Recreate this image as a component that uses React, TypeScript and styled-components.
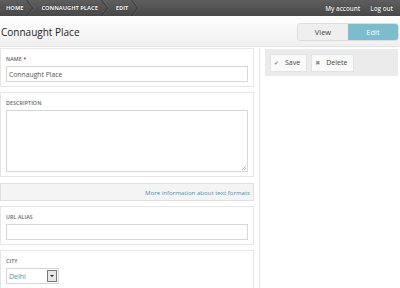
import React from "react";
import styled, { createGlobalStyle } from "styled-components";

const Global = createGlobalStyle`
  html, body { margin: 0; padding: 0; background: #fff; }
  body { font-family: "Open Sans", "DejaVu Sans", sans-serif; color: #333; }
  * { box-sizing: border-box; }
`;

const Page = styled.div`
  width: 400px;
  height: 288px;
  overflow: hidden;
  display: flex;
  flex-direction: column;
`;

const TopBar = styled.div`
  flex-shrink: 0;
  height: 16px;
  background: linear-gradient(#5e5e5e, #484848);
  display: flex;
  align-items: stretch;
  justify-content: space-between;
  font-size: 5.7px;
  font-weight: 700;
  color: #fff;
  text-shadow: 0 0 1px #000;
`;

const Crumbs = styled.div`
  display: flex;
  align-items: stretch;
  overflow: hidden;
`;

const Crumb = styled.div<{ $first?: boolean }>`
  position: relative;
  display: flex;
  align-items: center;
  padding: 0 13px 0 ${(p) => (p.$first ? 6 : 5)}px;
  &::after {
    content: "";
    position: absolute;
    right: 4px;
    top: 2px;
    width: 11px;
    height: 11px;
    transform: rotate(45deg) skew(8deg, 8deg);
    border-top: 1px solid #3c3c3c;
    border-right: 1px solid #3c3c3c;
    box-shadow: 1px -1px 0 rgba(255, 255, 255, 0.08);
  }
`;

const UserLinks = styled.div`
  display: flex;
  align-items: center;
  gap: 10px;
  padding-right: 7px;
  font-weight: 600;
  font-size: 6.3px;
`;

const Header = styled.div`
  flex-shrink: 0;
  height: 31px;
  background: linear-gradient(#fff, #f0f0f0);
  border-bottom: 1px solid #e4e4e4;
  display: flex;
  align-items: center;
  justify-content: space-between;
  padding: 0 2px 0 1px;
`;

const Title = styled.h1`
  margin: 0;
  font-size: 10px;
  font-weight: 400;
  color: #222;
  padding-top: 2px;
`;

const Tabs = styled.div`
  display: flex;
  margin-top: 1px;
  border-radius: 3px;
  overflow: hidden;
  box-shadow: 0 0 0 1px #ddd;
`;

const Tab = styled.div<{ $active?: boolean }>`
  width: 50px;
  height: 16px;
  display: flex;
  align-items: center;
  justify-content: center;
  font-size: 7.5px;
  background: ${(p) => (p.$active ? "#7bbccd" : "#efefef")};
  color: ${(p) => (p.$active ? "#fff" : "#444")};
`;

const Body = styled.div`
  flex: 1;
  min-height: 0;
  display: flex;
  padding-top: 1px;
`;

const Main = styled.div`
  flex-shrink: 0;
  width: 254px;
  display: flex;
  flex-direction: column;
  gap: 5px;
`;

const Side = styled.div`
  flex: 1;
  border-left: 1px solid #e4e4e4;
  margin-left: 5px;
  padding: 1px 2px 0 5px;
`;

const Section = styled.div`
  flex-shrink: 0;
  border: 1px solid #e6e6e6;
  padding: 7px 5px 4px 5px;
  display: flex;
  flex-direction: column;
  gap: 3px;
`;

const Label = styled.div`
  font-size: 5.3px;
  font-weight: 600;
  color: #666;
  text-transform: uppercase;
  letter-spacing: 0.1px;
  line-height: 7px;
  height: 7px;
`;

const Req = styled.span`
  color: #d00;
`;

const Input = styled.div`
  height: 16px;
  border: 1px solid #d6d6d6;
  font-size: 6.8px;
  color: #555;
  display: flex;
  align-items: center;
  padding-left: 2px;
`;

const TextArea = styled.div`
  position: relative;
  height: 62px;
  border: 1px solid #d6d6d6;
`;

const Grip = styled.svg`
  position: absolute;
  right: 1px;
  bottom: 1px;
`;

const Formats = styled.div`
  flex-shrink: 0;
  height: 18px;
  margin-top: 1px;
  background: #f4f4f4;
  border: 1px solid #e0e0e0;
  display: flex;
  align-items: center;
  justify-content: flex-end;
  padding-right: 3px;
  font-size: 6.1px;
  color: #4b8fb0;
`;

const Select = styled.div`
  width: 53px;
  height: 16px;
  border: 1px solid #d6d6d6;
  display: flex;
  align-items: center;
  justify-content: space-between;
  padding: 0 1px 0 2px;
  font-size: 7px;
  color: #4b8fb0;
`;

const SelectBtn = styled.div`
  width: 10px;
  height: 12px;
  border: 1px solid #777;
  background: #e6e6e6;
  display: flex;
  align-items: center;
  justify-content: center;
  &::after {
    content: "";
    border-left: 2px solid transparent;
    border-right: 2px solid transparent;
    border-top: 2px solid #222;
  }
`;

const Actions = styled.div`
  height: 27px;
  background: #ebebeb;
  display: flex;
  align-items: center;
  gap: 4px;
  padding-left: 5px;
`;

const Button = styled.div`
  height: 18px;
  background: #fafafa;
  border: 1px solid #e2e2e2;
  display: flex;
  align-items: center;
  gap: 6px;
  padding: 0 6px 0 3px;
  font-size: 7px;
  color: #444;
`;

const Icon = styled.span`
  font-size: 6px;
  color: #888;
`;

export default function App() {
  return (
    <Page>
      <Global />
      <TopBar>
        <Crumbs>
          <Crumb $first>HOME</Crumb>
          <Crumb>CONNAUGHT PLACE</Crumb>
          <Crumb>EDIT</Crumb>
        </Crumbs>
        <UserLinks>
          <span>My account</span>
          <span>Log out</span>
        </UserLinks>
      </TopBar>
      <Header>
        <Title>Connaught Place</Title>
        <Tabs>
          <Tab>View</Tab>
          <Tab $active>Edit</Tab>
        </Tabs>
      </Header>
      <Body>
        <Main>
          <Section>
            <Label>
              Name <Req>*</Req>
            </Label>
            <Input>Connaught Place</Input>
          </Section>
          <Section>
            <Label>Description</Label>
            <TextArea>
              <Grip width="5" height="5" viewBox="0 0 5 5">
                <path d="M1 5L5 1M3 5L5 3" stroke="#999" strokeWidth="0.7" />
              </Grip>
            </TextArea>
          </Section>
          <Formats>More information about text formats</Formats>
          <Section>
            <Label>URL alias</Label>
            <Input />
          </Section>
          <Section>
            <Label>City</Label>
            <Select>
              Delhi
              <SelectBtn />
            </Select>
          </Section>
        </Main>
        <Side>
          <Actions>
            <Button>
              <Icon>✔</Icon>Save
            </Button>
            <Button>
              <Icon>✖</Icon>Delete
            </Button>
          </Actions>
        </Side>
      </Body>
    </Page>
  );
}
